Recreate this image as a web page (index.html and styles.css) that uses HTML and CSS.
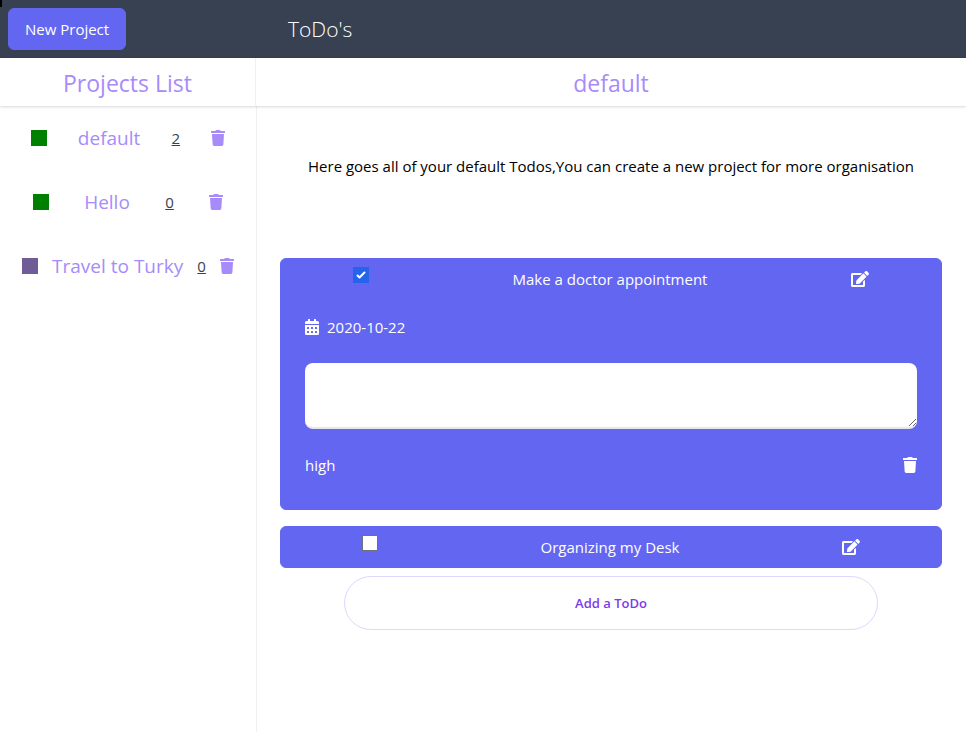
FILE: index.html
```html
<!DOCTYPE html>
<html lang="en">
<head>
  <meta charset="utf-8">
  <meta name="viewport" content="width=device-width, initial-scale=1">
  <title>ToDo's</title>
  <link rel="stylesheet" href="styles.css">
</head>
<body>
  <svg class="sprite" aria-hidden="true">
    <symbol id="trash" viewBox="0 0 448 512">
      <path d="M432 32H312l-9-19A24 24 0 0 0 281 0H167a24 24 0 0 0-22 13l-9 19H16A16 16 0 0 0 0 48v32a16 16 0 0 0 16 16h416a16 16 0 0 0 16-16V48a16 16 0 0 0-16-16zM53 467a48 48 0 0 0 48 45h246a48 48 0 0 0 48-45l21-339H32z"/>
    </symbol>
    <symbol id="calendar" viewBox="0 0 448 512">
      <path d="M0 464a48 48 0 0 0 48 48h352a48 48 0 0 0 48-48V192H0zm320-196a12 12 0 0 1 12-12h40a12 12 0 0 1 12 12v40a12 12 0 0 1-12 12h-40a12 12 0 0 1-12-12zm0 128a12 12 0 0 1 12-12h40a12 12 0 0 1 12 12v40a12 12 0 0 1-12 12h-40a12 12 0 0 1-12-12zM192 268a12 12 0 0 1 12-12h40a12 12 0 0 1 12 12v40a12 12 0 0 1-12 12h-40a12 12 0 0 1-12-12zm0 128a12 12 0 0 1 12-12h40a12 12 0 0 1 12 12v40a12 12 0 0 1-12 12h-40a12 12 0 0 1-12-12zM64 268a12 12 0 0 1 12-12h40a12 12 0 0 1 12 12v40a12 12 0 0 1-12 12H76a12 12 0 0 1-12-12zm0 128a12 12 0 0 1 12-12h40a12 12 0 0 1 12 12v40a12 12 0 0 1-12 12H76a12 12 0 0 1-12-12zM400 64h-48V16a16 16 0 0 0-16-16h-32a16 16 0 0 0-16 16v48H160V16a16 16 0 0 0-16-16h-32a16 16 0 0 0-16 16v48H48a48 48 0 0 0-48 48v48h448v-48a48 48 0 0 0-48-48z"/>
    </symbol>
    <symbol id="edit" viewBox="0 0 576 512">
      <path d="M402.600 83.200l90.200 90.200c3.800 3.800 3.800 10 0 13.800L274.400 405.600l-92.800 10.300c-12.400 1.400-22.900-9.100-21.500-21.500l10.300-92.800L388.800 83.200c3.800-3.800 10-3.800 13.800 0zm162-22.900l-48.800-48.800c-15.200-15.200-39.900-15.200-55.200 0l-35.400 35.400c-3.800 3.800-3.800 10 0 13.800l90.200 90.200c3.800 3.800 10 3.800 13.800 0l35.400-35.400c15.200-15.300 15.200-40 0-55.200zM384 346.200V448H64V128h229.800c3.200 0 6.200-1.300 8.500-3.500l40-40c7.600-7.600 2.200-20.500-8.500-20.500H48C21.500 64 0 85.500 0 112v352c0 26.500 21.500 48 48 48h352c26.500 0 48-21.500 48-48V306.200c0-10.700-12.900-16-20.500-8.500l-40 40c-2.200 2.300-3.500 5.300-3.500 8.500z"/>
    </symbol>
  </svg>

  <header class="topbar">
    <div class="topbar-action"><button class="new-project" type="button">New Project</button></div>
    <h1 class="brand">ToDo's</h1>
  </header>

  <div class="headings">
    <h2 class="heading heading-side">Projects List</h2>
    <h2 class="heading">default</h2>
  </div>

  <div class="layout">
    <nav class="projects" aria-label="Projects">
      <div class="project">
        <span class="swatch"></span>
        <a class="project-name" href="#default">default</a>
        <span class="count">2</span>
        <button class="icon-button" type="button" aria-label="Delete default"><svg class="icon"><use href="#trash"/></svg></button>
      </div>
      <div class="project">
        <span class="swatch"></span>
        <a class="project-name" href="#hello">Hello</a>
        <span class="count">0</span>
        <button class="icon-button" type="button" aria-label="Delete Hello"><svg class="icon"><use href="#trash"/></svg></button>
      </div>
      <div class="project">
        <span class="swatch swatch-purple"></span>
        <a class="project-name" href="#travel">Travel to Turky</a>
        <span class="count">0</span>
        <button class="icon-button" type="button" aria-label="Delete Travel to Turky"><svg class="icon"><use href="#trash"/></svg></button>
      </div>
    </nav>

    <main class="todos">
      <p class="description">Here goes all of your default Todos,You can create a new project for more organisation</p>

      <article class="todo">
        <div class="todo-head">
          <input class="check" type="checkbox" id="todo-1" checked>
          <label for="todo-1">Make a doctor appointment</label>
          <button class="icon-button" type="button" aria-label="Edit"><svg class="icon icon-wide"><use href="#edit"/></svg></button>
        </div>
        <div class="todo-body">
          <div class="due"><svg class="icon"><use href="#calendar"/></svg><time datetime="2020-10-22">2020-10-22</time></div>
          <textarea class="notes" aria-label="Notes"></textarea>
          <div class="todo-foot">
            <span>high</span>
            <button class="icon-button" type="button" aria-label="Delete"><svg class="icon"><use href="#trash"/></svg></button>
          </div>
        </div>
      </article>

      <article class="todo">
        <div class="todo-head">
          <input class="check" type="checkbox" id="todo-2">
          <label for="todo-2">Organizing my Desk</label>
          <button class="icon-button" type="button" aria-label="Edit"><svg class="icon icon-wide"><use href="#edit"/></svg></button>
        </div>
      </article>

      <button class="add-todo" type="button">Add a ToDo</button>
    </main>
  </div>
</body>
</html>
```
FILE: styles.css
```css
*, *::before, *::after { box-sizing: border-box; }

body {
  margin: 0;
  min-height: 100vh;
  display: flex;
  flex-direction: column;
  background: #fff;
  color: #000;
  font: 15px/24px "Open Sans", "Noto Sans", sans-serif;
}

h1, h2, p { margin: 0; font-weight: 400; }
button, textarea { font: inherit; color: inherit; }
button { cursor: pointer; }

.sprite { position: absolute; width: 0; height: 0; }

.icon { display: block; width: 14px; height: 16px; fill: currentColor; }
.icon-wide { width: 18px; }
.icon-button { padding: 0; border: 0; background: none; }

.topbar, .headings {
  display: grid;
  grid-template-columns: 256px 1fr;
}
.layout {
  flex: 1;
  display: grid;
  grid-template-columns: 257px 1fr;
}

.topbar {
  position: relative;
  align-items: center;
  background: #374151;
  color: #fff;
}
.topbar::before {
  content: "";
  position: absolute;
  top: 0;
  left: 0;
  width: 2px;
  height: 7px;
  background: #000;
}
.topbar-action { padding: 8px; }
.new-project {
  display: block;
  padding: 8px 16px;
  border: 1px solid #6366f1;
  border-radius: 6px;
  background: #6366f1;
}
.brand { padding: 0 32px; font-size: 21px; font-weight: 300; line-height: 32px; }

.headings {
  position: relative;
  box-shadow: 0 1px 3px rgba(0, 0, 0, .1), 0 1px 2px rgba(0, 0, 0, .06);
}
.heading {
  padding: 9px 8px 7px;
  color: #a78bfa;
  font-size: 23px;
  line-height: 32px;
  text-align: center;
}
.heading-side { border-right: 1px solid #f0f0f2; }

.projects { padding: 0 15px; border-right: 1px solid #f0f0f2; }
.project {
  display: flex;
  justify-content: space-around;
  align-items: center;
  height: 64px;
}
.swatch { width: 16px; height: 16px; background: #008000; }
.swatch-purple { background: #705c96; }
.project-name { color: #a78bfa; font-size: 19px; line-height: 28px; text-decoration: none; }
.count { color: #374151; text-decoration: underline; }
.project .icon-button { color: #a78bfa; }

.todos { padding: 0 24px 0 23px; }
.description { padding: 48px 16px 80px; text-align: center; }

.todo {
  margin-bottom: 16px;
  border: 1px solid #6366f1;
  border-radius: 6px;
  background: #6366f1;
  color: #fff;
}
.todo-head { display: flex; justify-content: space-around; padding: 8px 0; }

.check {
  appearance: none;
  width: 16px;
  height: 16px;
  margin: 0;
  border: 1px solid #6b7280;
  background: #fff;
}
.check:checked {
  border-color: #2563eb;
  background: #2563eb url("data:image/svg+xml,%3Csvg viewBox='0 0 16 16' fill='white' xmlns='http://www.w3.org/2000/svg'%3E%3Cpath d='M12.207 4.793a1 1 0 010 1.414l-5 5a1 1 0 01-1.414 0l-2-2a1 1 0 011.414-1.414L6.500 9.086l4.293-4.293a1 1 0 011.414 0z'/%3E%3C/svg%3E") center / 16px;
}

.todo-body { padding: 16px 24px 32px; }
.due { display: flex; align-items: center; gap: 8px; }
.notes {
  display: block;
  width: 100%;
  height: 66px;
  margin: 24px 0;
  padding: 8px;
  border: 0;
  border-bottom: 2px solid #e5e7eb;
  border-radius: 8px;
  background: #fff;
  color: #000;
  resize: vertical;
}
.todo-foot { display: flex; justify-content: space-between; align-items: center; }

.add-todo {
  display: block;
  width: calc(100% - 128px);
  margin: -8px auto 0;
  padding: 14px 16px;
  border: 1px solid #ddd6fe;
  border-radius: 27px;
  background: #fff;
  color: #7c3aed;
  font-size: 13px;
  font-weight: 600;
}
```
